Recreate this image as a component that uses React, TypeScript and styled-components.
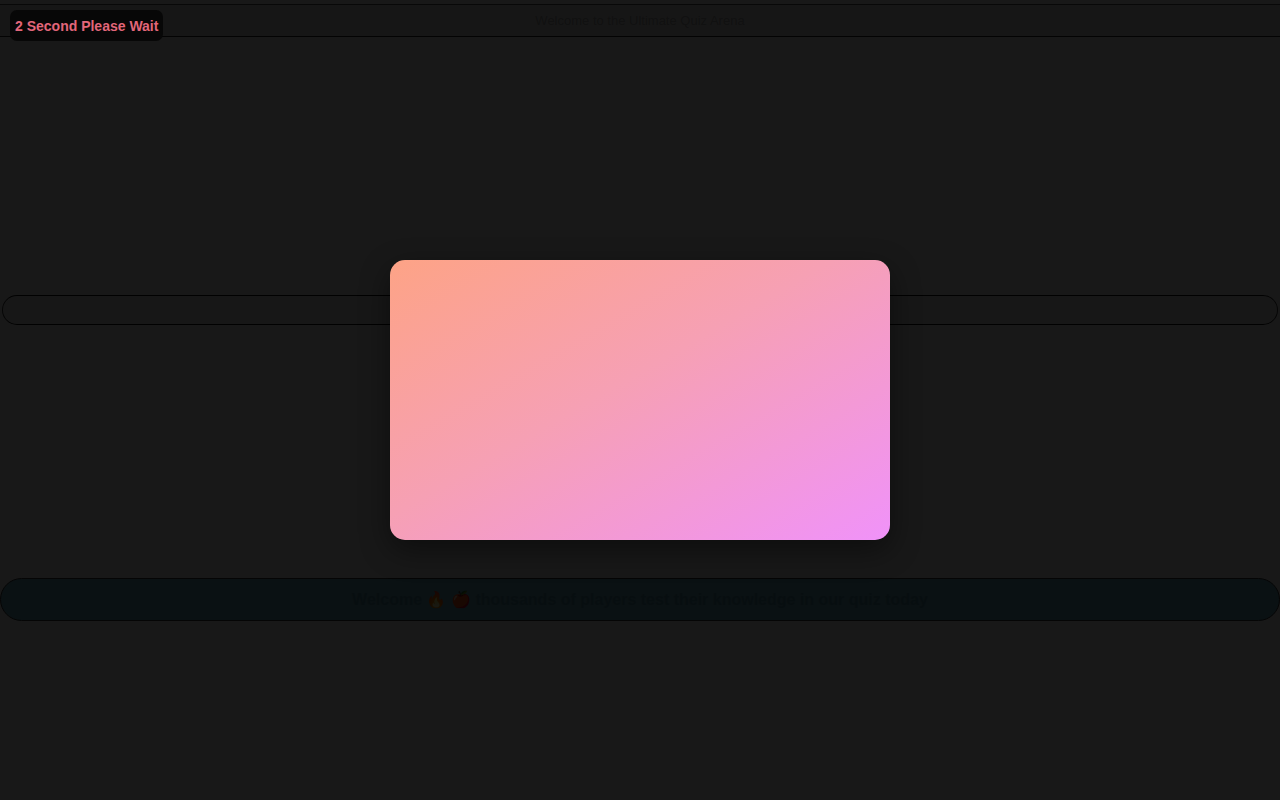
import styled, { createGlobalStyle } from "styled-components";

const GlobalStyle = createGlobalStyle`
  html, body {
    margin: 0;
    padding: 0;
    background: #f4f4f4;
    font-family: "Liberation Sans", Arial, sans-serif;
  }
  #root {
    min-height: 100vh;
  }
`;

const Page = styled.div`
  position: relative;
  min-height: 800px;
  padding-top: 4px;
  box-sizing: border-box;
  background: #f4f4f4;
`;

const Header = styled.header`
  height: 31px;
  display: flex;
  align-items: center;
  justify-content: center;
  border-top: 1px solid #555;
  border-bottom: 1px solid #222;
  background: #e2e2e2;
  font-size: 13px;
  color: #a8a8a8;
`;

const Body = styled.main`
  display: flex;
  flex-direction: column;
  padding: 258px 2px 0;
  gap: 253px;
`;

const SearchBar = styled.div`
  height: 28px;
  border: 1px solid #3a3a3a;
  border-top-color: #111;
  border-bottom-color: #111;
  border-radius: 15px;
  background: #ececec;
`;

const Banner = styled.div`
  height: 41px;
  margin: 0 -2px;
  display: flex;
  align-items: center;
  justify-content: center;
  gap: 6px;
  border: 1px solid #333;
  border-radius: 22px;
  background: #68a8bc;
  font-size: 16px;
  font-weight: bold;
  color: #4e8ea2;
`;

const Overlay = styled.div`
  position: absolute;
  inset: 0;
  background: rgba(0, 0, 0, 0.9);
  display: flex;
  align-items: center;
  justify-content: center;
`;

const Modal = styled.div`
  width: 500px;
  height: 280px;
  border-radius: 15px;
  background: linear-gradient(150deg, #fda386 0%, #f6a0b4 45%, #f092f9 100%);
  box-shadow: 0 10px 30px rgba(0, 0, 0, 0.45);
`;

const WaitBadge = styled.div`
  position: absolute;
  top: 10px;
  left: 10px;
  height: 31px;
  padding: 0 5px;
  display: flex;
  align-items: center;
  border-radius: 7px;
  background: #070707;
  color: #e2667a;
  font-size: 14px;
  font-weight: bold;
`;

export default function App() {
  return (
    <>
      <GlobalStyle />
      <Page>
        <Header>Welcome to the Ultimate Quiz Arena</Header>
        <Body>
          <SearchBar />
          <Banner>
            Welcome 🔥 🍎 thousands of players test their knowledge in our quiz today
          </Banner>
        </Body>
        <Overlay>
          <Modal />
        </Overlay>
        <WaitBadge>2 Second Please Wait</WaitBadge>
      </Page>
    </>
  );
}
